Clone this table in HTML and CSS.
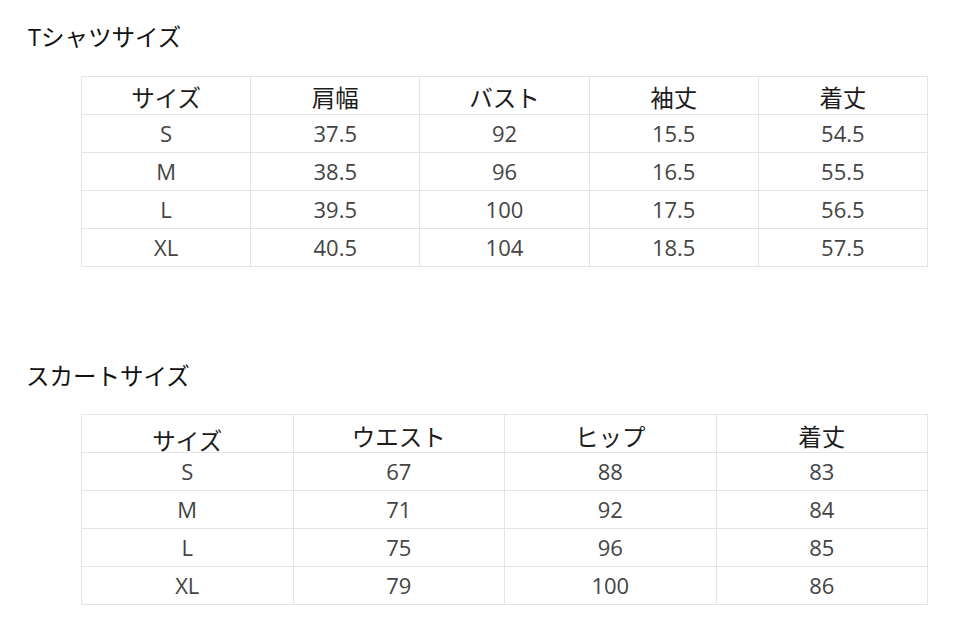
FILE: index.html
```html
<!DOCTYPE html>
<html lang="ja">
<head>
<meta charset="utf-8">
<link rel="stylesheet" href="styles.css">
</head>
<body>
<main class="page">
  <section class="block">
    <h2 class="title">Tシャツサイズ</h2>
    <table class="size-table">
      <tr class="head"><td>サイズ</td><td>肩幅</td><td>バスト</td><td>袖丈</td><td>着丈</td></tr>
      <tr><td>S</td><td>37.5</td><td>92</td><td>15.5</td><td>54.5</td></tr>
      <tr><td>M</td><td>38.5</td><td>96</td><td>16.5</td><td>55.5</td></tr>
      <tr><td>L</td><td>39.5</td><td>100</td><td>17.5</td><td>56.5</td></tr>
      <tr><td>XL</td><td>40.5</td><td>104</td><td>18.5</td><td>57.5</td></tr>
    </table>
  </section>
  <section class="block block-second">
    <h2 class="title title-skirt">スカートサイズ</h2>
    <table class="size-table skirt">
      <tr class="head"><td><span class="low">サイズ</span></td><td>ウエスト</td><td>ヒップ</td><td>着丈</td></tr>
      <tr><td>S</td><td>67</td><td>88</td><td>83</td></tr>
      <tr><td>M</td><td>71</td><td>92</td><td>84</td></tr>
      <tr><td>L</td><td>75</td><td>96</td><td>85</td></tr>
      <tr><td>XL</td><td>79</td><td>100</td><td>86</td></tr>
    </table>
  </section>
</main>
</body>
</html>
```
FILE: styles.css
```css
html, body {
  margin: 0;
  padding: 0;
  background: #ffffff;
}
body {
  font-family: "Open Sans", "Noto Sans CJK JP", sans-serif;
  color: #222;
}
.page {
  display: flex;
  flex-direction: column;
  padding: 22px 0 0 28px;
}
.block {
  display: flex;
  flex-direction: column;
}
.block-second {
  margin-top: 94px;
}
.title {
  margin: 0;
  font-size: 23.5px;
  font-weight: 400;
  line-height: 30px;
  color: #111;
}
.title-skirt {
  margin-left: -2px;
}
.size-table {
  margin: 24px 0 0 53px;
  width: 847px;
  border-collapse: collapse;
  table-layout: fixed;
}
.skirt {
  margin-top: 23px;
}
.size-table td {
  border: 1px solid #e4e4e4;
  height: 35px;
  padding: 0 0 2px;
  text-align: center;
  vertical-align: middle;
  font-size: 22px;
  line-height: 28px;
  color: #444;
}
.size-table .head td {
  height: 33px;
  padding: 4px 0 0;
  font-size: 23.5px;
  color: #1c1c1c;
}
.skirt .head td {
  height: 31px;
  padding: 6px 0 0;
}
.low {
  display: inline-block;
  transform: translateY(4px);
}
```
